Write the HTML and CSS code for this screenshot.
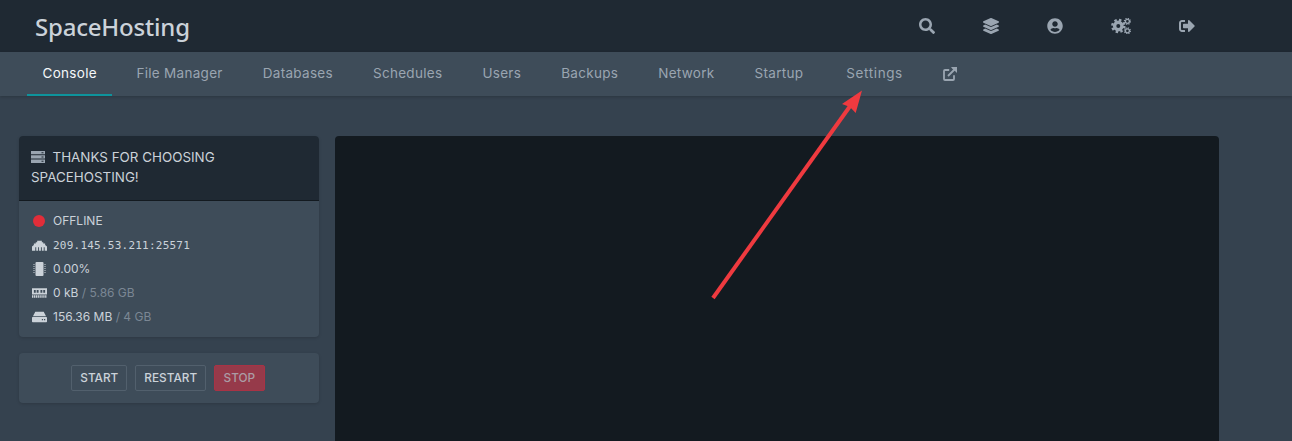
FILE: index.html
```html
<!DOCTYPE html>
<html lang="en">
<head>
<meta charset="utf-8">
<title>SpaceHosting</title>
<link rel="stylesheet" href="styles.css">
</head>
<body>
<header class="topbar">
  <div class="logo">SpaceHosting</div>
  <nav class="top-icons">
    <svg class="ti" viewBox="0 0 512 512"><path d="M505 442.7L405.3 343c-4.5-4.5-10.6-7-17-7H372c27.6-35.3 44-79.7 44-128C416 93.1 322.9 0 208 0S0 93.1 0 208s93.1 208 208 208c48.3 0 92.7-16.4 128-44v16.3c0 6.4 2.5 12.5 7 17l99.7 99.7c9.4 9.4 24.6 9.4 33.9 0l28.3-28.3c9.4-9.4 9.4-24.6.1-34zM208 336c-70.7 0-128-57.2-128-128 0-70.7 57.2-128 128-128 70.7 0 128 57.2 128 128 0 70.7-57.2 128-128 128z"/></svg>
    <svg class="ti" viewBox="0 0 512 512"><path d="M12.41 148.02l232.94 105.67c6.8 3.09 14.49 3.09 21.29 0l232.94-105.67c16.55-7.51 16.55-32.52 0-40.03L266.65 2.31a25.607 25.607 0 0 0-21.29 0L12.41 107.98c-16.55 7.51-16.55 32.53 0 40.04zm487.18 88.28l-58.09-26.33-161.64 73.27c-7.56 3.43-15.59 5.17-23.86 5.17s-16.29-1.74-23.86-5.17L70.51 209.97l-58.1 26.33c-16.55 7.5-16.55 32.5 0 40l232.94 105.59c6.8 3.08 14.49 3.08 21.29 0L499.59 276.3c16.55-7.5 16.55-32.5 0-40zm0 127.8l-57.87-26.23-161.86 73.37c-7.56 3.43-15.59 5.17-23.86 5.17s-16.29-1.74-23.86-5.17L70.29 337.87 12.41 364.1c-16.55 7.5-16.55 32.5 0 40l232.94 105.59c6.8 3.08 14.49 3.08 21.29 0L499.59 404.1c16.55-7.5 16.55-32.5 0-40z"/></svg>
    <svg class="ti" viewBox="0 0 496 512"><path d="M248 8C111 8 0 119 0 256s111 248 248 248 248-111 248-248S385 8 248 8zm0 96c48.6 0 88 39.4 88 88s-39.4 88-88 88-88-39.4-88-88 39.4-88 88-88zm0 344c-58.7 0-111.3-26.6-146.5-68.2 18.8-35.4 55.6-59.8 98.5-59.8 2.4 0 4.8.4 7.1 1.1 13 4.2 26.6 6.9 40.9 6.9 14.3 0 28-2.7 40.9-6.9 2.3-.7 4.7-1.1 7.1-1.1 42.9 0 79.7 24.4 98.5 59.8C359.3 421.4 306.7 448 248 448z"/></svg>
    <svg class="ti ti-cogs" viewBox="0 0 20 16">
      <circle class="gear-teeth" cx="7.3" cy="8" r="6"/><circle class="gear-body" cx="7.3" cy="8" r="3.7"/>
      <circle class="cog-teeth" cx="16.4" cy="3.300" r="3"/><circle class="cog-body" cx="16.4" cy="3.300" r="2"/>
      <circle class="cog-teeth" cx="16.4" cy="12.800" r="3"/><circle class="cog-body" cx="16.4" cy="12.800" r="2"/>
    </svg>
    <svg class="ti" viewBox="0 0 512 512"><path d="M497 273L329 441c-15 15-41 4.5-41-17v-96H152c-13.3 0-24-10.7-24-24v-96c0-13.3 10.7-24 24-24h136V88c0-21.4 25.9-32 41-17l168 168c9.3 9.4 9.3 24.6 0 34zM192 436v-40c0-6.6-5.4-12-12-12H96c-17.7 0-32-14.3-32-32V160c0-17.7 14.3-32 32-32h84c6.6 0 12-5.4 12-12V76c0-6.6-5.4-12-12-12H96c-53 0-96 43-96 96v192c0 53 43 96 96 96h84c6.6 0 12-5.4 12-12z"/></svg>
  </nav>
</header>
<nav class="subnav">
  <a class="tab active">Console</a>
  <a class="tab">File Manager</a>
  <a class="tab">Databases</a>
  <a class="tab">Schedules</a>
  <a class="tab">Users</a>
  <a class="tab">Backups</a>
  <a class="tab">Network</a>
  <a class="tab">Startup</a>
  <a class="tab tab-wide">Settings</a>
  <a class="tab tab-icon">
    <svg class="ext" viewBox="0 0 14 14"><path d="M11 8.2V12a1 1 0 0 1-1 1H2a1 1 0 0 1-1-1V4a1 1 0 0 1 1-1h4.2M5 9L12 2"/><path class="ext-head" d="M8 0h6v6L12 4 9.500 2z"/></svg>
  </a>
</nav>
<main class="content">
  <aside class="side">
    <section class="card">
      <h2 class="card-title">
        <svg class="srv" viewBox="0 0 14 12"><path d="M0 0h14v3.3H0zM0 4.3h14v3.3H0zM0 8.6h14V12H0z"/><path class="srv-dot" d="M10.500 1.200h2v1h-2zM10.500 5.500h2v1h-2zM10.500 9.800h2v1h-2z"/></svg>THANKS FOR CHOOSING SPACEHOSTING!
      </h2>
      <ul class="stats">
        <li class="stat"><span class="ico"><span class="dot"></span></span><span class="offline">OFFLINE</span></li>
        <li class="stat">
          <span class="ico"><svg viewBox="0 0 16 12"><path d="M0 12V7.500L2 6V4.500h2V3h1.500V1.500h5V3H12v1.500h2V6l2 1.500V12h-2.500V8.500h-1V12h-2V8.500h-1V12h-2V8.500h-1V12h-2V8.500h-1V12z"/></svg></span>
          <span class="mono">209.145.53.211:25571</span>
        </li>
        <li class="stat">
          <span class="ico"><svg class="chip" viewBox="0 0 12 14"><path d="M3 0h6a1 1 0 0 1 1 1v12a1 1 0 0 1-1 1H3a1 1 0 0 1-1-1V1a1 1 0 0 1 1-1z"/><path class="pins" d="M0.500 2v10M11.500 2v10"/></svg></span>
          <span>0.00%</span>
        </li>
        <li class="stat">
          <span class="ico"><svg viewBox="0 0 16 10"><path d="M0 0h16v6.500H0z"/><path class="ram-foot" d="M0 8.700h16"/><path class="ram" d="M2 1.800h2v3H2zM5 1.800h2v3H5zM9 1.800h2v3H9zM12 1.800h2v3h-2z"/></svg></span>
          <span>0 kB <span class="muted">/ 5.86 GB</span></span>
        </li>
        <li class="stat">
          <span class="ico"><svg viewBox="0 0 16 11"><path d="M3.500 0h9L15 4.600H1zM0.800 5.600h14.400a.8.800 0 0 1 .8.8v3.800a.8.800 0 0 1-.8.8H.8a.8.800 0 0 1-.8-.8V6.400a.8.800 0 0 1 .8-.8z"/><path class="ram" d="M10.500 7.700h1.300V9h-1.300zM12.800 7.700h1.300V9h-1.300z"/></svg></span>
          <span>156.36 MB <span class="muted">/ 4 GB</span></span>
        </li>
      </ul>
    </section>
    <section class="controls">
      <button class="btn">START</button>
      <button class="btn">RESTART</button>
      <button class="btn btn-stop">STOP</button>
    </section>
  </aside>
  <div class="terminal"></div>
</main>
<svg class="annot" viewBox="0 0 1292 441">
  <path class="annot-line" d="M713 298L853 102"/>
  <path class="annot-head" d="M862 90.500L855.700 113L850 107L842 104z"/>
</svg>
</body>
</html>
```
FILE: styles.css
```css
* { box-sizing: border-box; }
html, body { margin: 0; padding: 0; height: 100%; overflow: hidden; }
body {
  position: relative;
  background: #35424f;
  font-family: "Inter", "Liberation Sans", sans-serif;
  color: #cbd2d9;
}
.topbar {
  height: 52px;
  background: #1f2933;
  display: flex;
  align-items: center;
  justify-content: space-between;
  padding-left: 35px;
  padding-right: 97px;
}
.logo {
  font-family: "Noto Sans", "Liberation Sans", sans-serif;
  font-size: 24px;
  font-weight: 500;
  color: #cbd2d9;
  letter-spacing: -0.2px;
}
.top-icons { display: flex; align-items: center; gap: 48px; }
.ti { width: 16px; height: 16px; fill: #9aa5b1; display: block; }
.ti-cogs { width: 20px; height: 16px; fill: none; }
.gear-teeth { fill: none; stroke: #9aa5b1; stroke-width: 2.400; stroke-dasharray: 2.400 2.312; }
.gear-body { fill: none; stroke: #9aa5b1; stroke-width: 3.400; }
.cog-teeth { fill: none; stroke: #9aa5b1; stroke-width: 1.200; stroke-dasharray: 1.200 1.156; }
.cog-body { fill: none; stroke: #9aa5b1; stroke-width: 1.300; }
.subnav {
  height: 44px;
  background: #3e4c59;
  display: flex;
  gap: 8px;
  padding-left: 27px;
  box-shadow: 0 1px 3px rgba(0, 0, 0, .2);
}
.tab {
  display: flex;
  align-items: center;
  padding: 0 16px;
  height: 44px;
  font-size: 13.500px;
  letter-spacing: 0.3px;
  color: #9aa5b1;
  border-bottom: 2px solid transparent;
}
.tab.active { color: #f5f7fa; border-bottom-color: #0e939c; padding: 0 15.500px; }
.tab-wide { letter-spacing: 0.6px; margin-left: 3px; }
.ext { width: 14px; height: 14px; margin-top: 2px; fill: none; stroke: #9aa5b1; stroke-width: 1.800; display: block; }
.ext-head { fill: #9aa5b1; stroke: none; }
.content {
  display: grid;
  grid-template-columns: 300px 884px;
  column-gap: 16px;
  padding: 40px 0 0 19px;
  align-items: start;
}
.side { display: flex; flex-direction: column; gap: 16px; }
.card {
  background: #3e4c59;
  border-radius: 4px;
  overflow: hidden;
  box-shadow: 0 1px 3px rgba(0, 0, 0, .15);
}
.card-title {
  margin: 0;
  height: 65px;
  background: #1f2933;
  padding: 11px 11px 0 12px;
  font-size: 13.400px;
  font-weight: 400;
  line-height: 20px;
  color: #cbd2d9;
  border-bottom: 1px solid #131a20;
}
.srv { width: 14px; height: 12px; fill: #9aa5b1; margin-right: 7.500px; vertical-align: -1px; }
.srv-dot { fill: #1f2933; }
.stats { list-style: none; margin: 0; padding: 8px 0 8px 12px; height: 136px; }
.stat {
  display: flex;
  align-items: center;
  height: 24px;
  font-size: 12px;
  line-height: 14px;
  color: #cbd2d9;
}
.ico { width: 16px; margin-right: 6px; display: flex; justify-content: center; }
.ico svg { width: 15px; height: 12px; fill: #cbd2d9; display: block; }
.ico .chip { height: 14px; }
.pins { stroke: #cbd2d9; stroke-width: 1; stroke-dasharray: 1 1; fill: none; }
.ram { fill: #3e4c59; }
.ram-foot { stroke: #cbd2d9; stroke-width: 2.500; stroke-dasharray: 1.400 .6; fill: none; }
.dot { width: 12px; height: 12px; border-radius: 50%; background: #e12d39; }
.muted { color: #7b8794; }
.mono {
  font-family: "DejaVu Sans Mono", "Liberation Mono", monospace;
  font-size: 11px;
  letter-spacing: 0.23px;
  padding-top: 2px;
}
.controls {
  height: 50px;
  background: #3e4c59;
  border-radius: 4px;
  display: flex;
  justify-content: center;
  align-items: center;
  gap: 8px;
  padding-right: 2px;
  box-shadow: 0 1px 3px rgba(0, 0, 0, .15);
}
.btn {
  height: 26px;
  padding: 0 8px;
  font-family: inherit;
  font-size: 11.800px;
  font-weight: 500;
  color: #cbd2d9;
  background: transparent;
  border: 1px solid #52606d;
  border-radius: 2px;
}
.btn-stop { background: #963a4a; color: #ab9ca5; border-color: #a83345; padding: 0 8.500px; }
.terminal { height: 305px; background: #131a20; border-radius: 4px 4px 0 0; }
.annot { position: absolute; left: 0; top: 0; width: 1292px; height: 441px; pointer-events: none; }
.annot-line { stroke: #ef3a3f; stroke-width: 4; fill: none; }
.annot-head { fill: #ef3a3f; }
```
